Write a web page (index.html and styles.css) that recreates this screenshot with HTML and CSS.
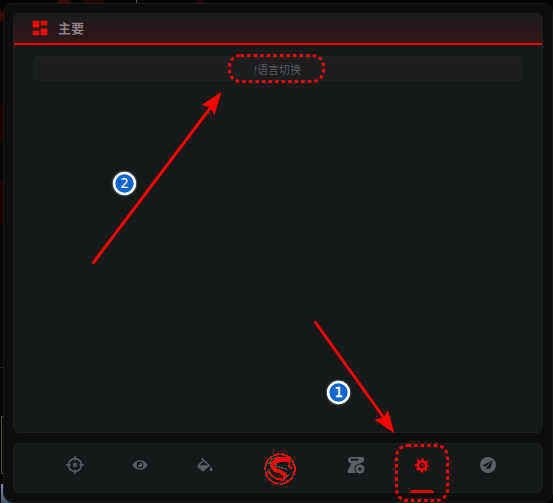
FILE: index.html
```html
<!DOCTYPE html>
<html lang="zh-CN">
<head>
<meta charset="utf-8">
<title>主要</title>
<link rel="stylesheet" href="styles.css">
</head>
<body>
<svg class="backdrop" width="553" height="503" viewBox="0 0 553 503">
  <defs>
    <linearGradient id="sky" x1="0" y1="0" x2="0" y2="1"><stop offset="0" stop-color="#858fa0"/><stop offset="1" stop-color="#3c5570"/></linearGradient>
  </defs>
  <path d="M0 8q5 6 2 14H0zM58 0h10l5 3H56z" fill="#3a0705"/>
  <path d="M82 0h22v3H82zM196 0h8v3h-8z" fill="#1c0504"/>
  <path d="M0 104h3v38H0zM0 180h3v44H0z" fill="#1c0303"/>
  <path d="M136.5 0v3" stroke="#55504a"/>
  <path d="M0 367.500h3" stroke="#2b1d18"/>
  <path d="M3 416.500H1.500V473.500H3" fill="none" stroke="#55503f"/>
  <path d="M1 484h3l4 15 6 4H1z" fill="url(#sky)"/>
</svg>
<div class="window">
  <section class="panel">
    <header class="panel-header">
      <svg class="grid-icon" width="16" height="16" viewBox="0 0 16 16" fill="#ff0000">
        <rect x=".7" y=".8" width="6.600" height="6.600" rx=".9"/><rect x="8.700" y=".8" width="6.600" height="4.400" rx=".9"/>
        <rect x=".7" y="10.700" width="6.600" height="4.500" rx=".9"/><rect x="8.700" y="8.600" width="6.600" height="6.600" rx=".9"/>
      </svg>
      <h1 class="title">主要</h1>
    </header>
    <button class="language">!语言切换</button>
  </section>
  <nav class="nav">
    <a class="item"><svg width="18" height="18" viewBox="0 0 18 18" fill="none" stroke="#5c5f65" stroke-width="1.500">
      <circle cx="9" cy="9" r="6.500"/><circle cx="9" cy="9" r="1.400"/><path d="M9 0v4.500M9 13.500V18M0 9h4.500M13.500 9H18"/></svg></a>
    <a class="item"><svg width="16" height="16" viewBox="0 0 16 16">
      <path d="M.3 8Q3.400 3.300 8 3.300T15.700 8Q12.600 12.800 8 12.800T.3 8z" fill="#5c5f65"/>
      <circle cx="8" cy="8" r="3.400" fill="#15191a"/><path d="M8 5.700A2.300 2.300 0 1 1 5.700 8h1.400Q8 8 8 7z" fill="#5c5f65"/></svg></a>
    <a class="item"><svg width="16" height="16" viewBox="0 0 16 16">
      <path d="M4.500 1.200l7.700 7.300-5.500 5Q6 14 5.400 13.500L1.500 9.700Q.8 9 1.500 8.200L6.500 3.500" fill="none" stroke="#5c5f65" stroke-width="1.500"/>
      <path d="M1 8.300h11.500l-6 5.700z" fill="#5c5f65"/><path d="M14 9.500q2 3 1.400 4t-2.700 0q-.5-1 1.300-4z" fill="#5c5f65"/></svg></a>
    <a class="item logo"><svg width="34" height="34" viewBox="0 0 34 34" fill="none" shape-rendering="crispEdges">
      <circle cx="17" cy="17" r="14.500" stroke="#4b4445" stroke-width="1.500"/>
      <circle cx="17" cy="17" r="14.800" stroke="#ff0000" stroke-width="2" stroke-dasharray="6 2 3 1.500"/>
      <path d="M6 12l3-5 6-2M6 17l1 4 4 5M13 11v3l6 2 5 1M22 26l4-3" stroke="#514849" stroke-width="1.500"/>
      <path d="M11 7l3-2h10l3 3v2h-8l-6 1-2 3 2 2 5 2 4 2 2 3-1 4-3 2h-2l2-3v-3l-3-2-5-1-4-3-1-5 2-3z" fill="#ff0000"/>
      <path d="M5 19l4 5 5 3h5M13 20h4l2 3M27 9l-1 5 3 3" stroke="#ff0000" stroke-width="1.500"/></svg></a>
    <a class="item"><svg width="18" height="18" viewBox="0 0 18 18">
      <path d="M3.500 1H15q2.500 0 2 3-.5 3-3.500 3L12 10l2 7H2.500Q0 17 .8 14.300L2 12q1.500-2 2.500-5H3Q.6 6 1 3.500 1.500 1 3.500 1z" fill="#5c5f65"/>
      <path d="M4.500 2.700h7.800q-.7.700-1 1.900H4.300q-1.100-.3-.7-1.100.2-.8.900-.8z" fill="#15191a"/>
      <circle cx="13" cy="13" r="5.500" fill="#15191a"/><circle cx="13" cy="13" r="4.600" fill="#5c5f65"/><path d="M13 10.700v4.600M10.700 13h4.600" stroke="#15191a" stroke-width="1.200"/></svg></a>
    <a class="item active"><svg width="16" height="16" viewBox="0 0 16 16">
      <circle cx="8" cy="8.500" r="4" fill="none" stroke="#ff0000" stroke-width="2.600"/>
      <circle cx="8" cy="8.500" r="5.800" fill="none" stroke="#ff0000" stroke-width="2.200" stroke-dasharray="2.400 2.155" stroke-dashoffset="1.200"/>
      <path d="M6.500 6.500l3 1v3z" fill="#d30606"/></svg></a>
    <a class="item"><svg width="16" height="16" viewBox="0 0 16 16"><circle cx="8" cy="8" r="8" fill="#5c5f65"/>
      <path d="M13 3L2.500 8.200l3 1.600z M13 3L6.500 10.500v2.800L8 11.300l2 1z" fill="#15191a"/></svg></a>
  </nav>
</div>
<svg class="callouts" width="553" height="503" viewBox="0 0 553 503">
  <defs><filter id="glow" x="-20%" y="-20%" width="140%" height="140%"><feDropShadow dx="0" dy="0" stdDeviation="1" flood-color="#fff" flood-opacity=".5"/></filter></defs>
  <g fill="none" stroke="#ff0000" stroke-width="3">
    <rect x="229.500" y="55.500" width="94" height="26" rx="11" stroke-dasharray="3.500 3.060" />
    <rect x="396.500" y="445.500" width="51" height="55" rx="11" stroke-dasharray="3.500 3.080"/>
    <path d="M93.500 262.500L211 107M315.500 322.500L384 418" stroke-linecap="round"/>
  </g>
  <path d="M221.500 92L214.500 115 210 107.500 201.500 105z" fill="#ff0000"/>
  <path d="M394.500 433.500L374.500 419.500 383.500 417.500 388 410.500z" fill="#ff0000"/>
  <g filter="url(#glow)" fill="#0866ce" stroke="#fff" stroke-width="2.500">
    <circle cx="124.500" cy="183.500" r="10.400"/><circle cx="338.500" cy="392.500" r="10.400"/>
  </g>
  <g class="numbers"><text x="124.500" y="188">2</text><text class="strong" x="338.700" y="397">1</text></g>
</svg>
</body>
</html>
```
FILE: styles.css
```css
* { box-sizing: border-box; }

body {
  width: 553px;
  height: 503px;
  margin: 0;
  padding: 3px 1px 0 3px;
  overflow: hidden;
  background: #050505;
  font-family: "Liberation Sans", "Noto Sans CJK SC", sans-serif;
}

.backdrop, .callouts { position: absolute; top: 0; left: 0; }
.callouts { pointer-events: none; }

.window {
  position: relative;
  display: flex;
  flex-direction: column;
  gap: 10px;
  width: 550px;
  height: 500px;
  padding: 9px;
  border: 1px solid #1a1b1b;
  border-radius: 10px;
  background: #0d0d0d;
}

.panel {
  height: 420px;
  width: 530px;
  overflow: hidden;
  border: 1px solid #1b1f20;
  border-radius: 6px;
  background: #15191a;
}

.panel-header {
  display: flex;
  align-items: center;
  gap: 10px;
  height: 32px;
  margin: -1px -1px 0;
  padding: 0 19px;
  border-bottom: 2px solid #ff0000;
  background: linear-gradient(#191b1d, #321518);
}

.title {
  margin: 0;
  padding-top: 1px;
  color: #8c7f86;
  font-size: 13px;
  font-weight: 700;
  line-height: 18px;
}

.language {
  display: block;
  width: 490px;
  height: 25px;
  margin: 11px 19px 0;
  padding: 0 1px 0 0;
  border: 1px solid #1e2021;
  border-radius: 4px;
  background: #1c1d1e;
  color: #58595d;
  font: 11px "Liberation Sans", "Noto Sans CJK SC", sans-serif;
}

.nav {
  display: grid;
  grid-template-columns: 65px 65px 65px 85px 66px 67px 65px;
  width: 530px;
  height: 50px;
  padding-left: 28.5px;
  border: 1px solid #1b1f20;
  border-radius: 6px;
  background: #15191a;
}

.item {
  position: relative;
  display: flex;
  align-items: center;
  justify-content: center;
  height: 42px;
}

.logo { height: 50px; }

.active::after {
  content: "";
  position: absolute;
  bottom: -7px;
  width: 24px;
  height: 3px;
  border-radius: 3px 3px 0 0;
  background: #d80808;
}

.numbers {
  fill: #fff;
  font: 13.5px "DejaVu Sans", sans-serif;
  text-anchor: middle;
}

.strong { stroke: #fff; stroke-width: 0.4px; }
```
